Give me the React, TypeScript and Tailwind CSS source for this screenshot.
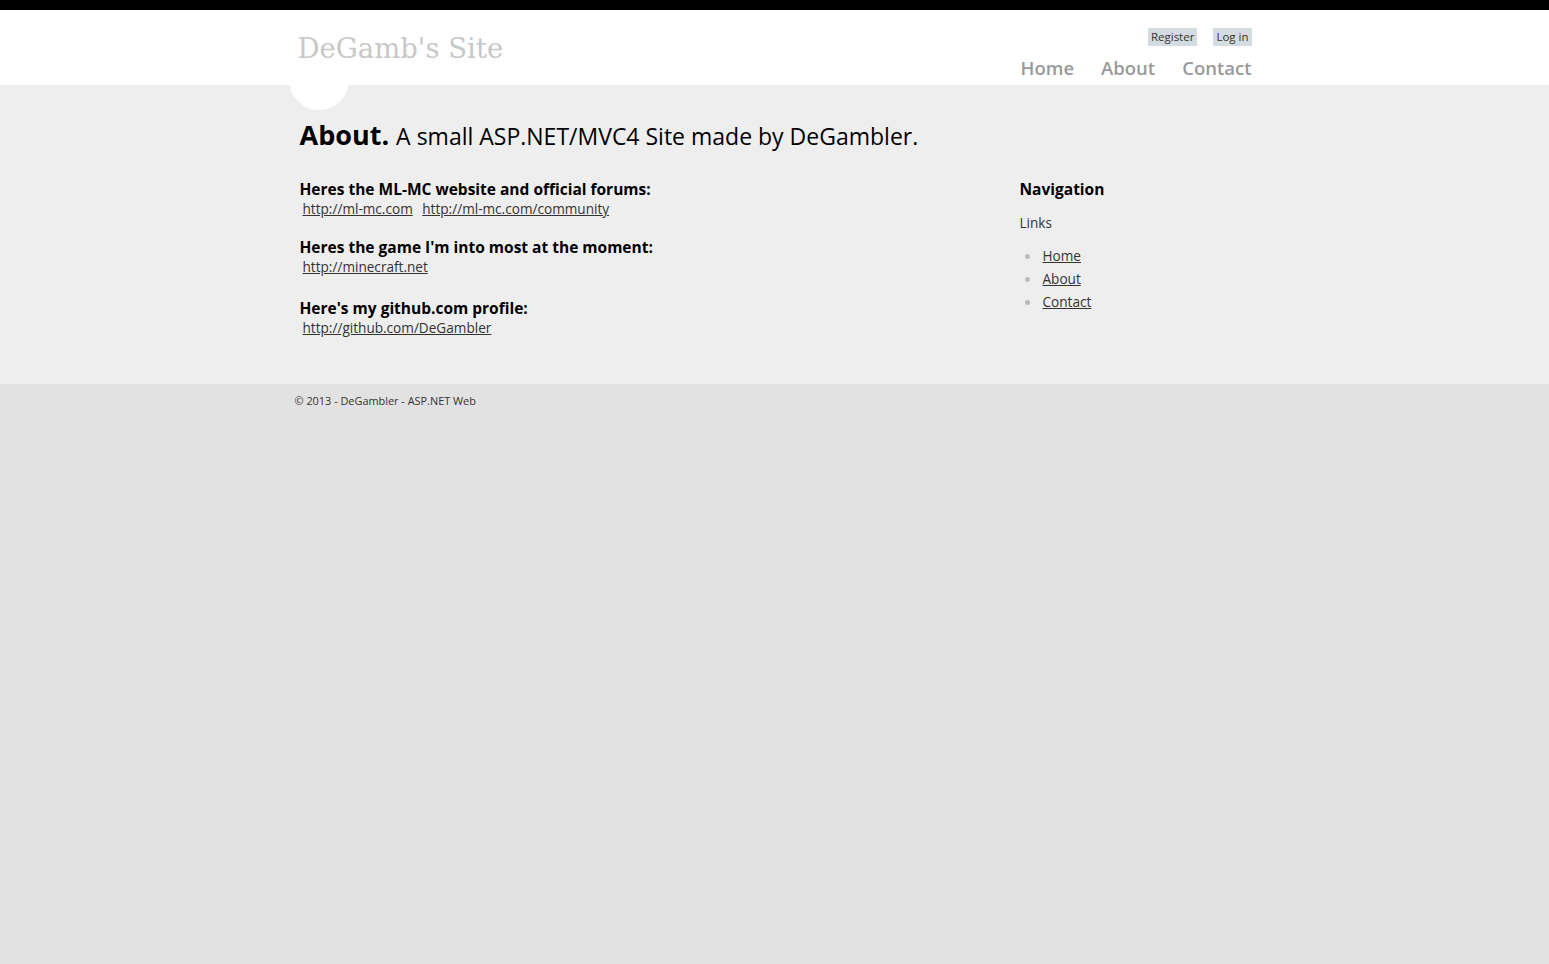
import React from 'react';

const sans = { fontFamily: '"Open Sans", "Noto Sans", sans-serif' };

const links = ['Home', 'About', 'Contact'];

export default function App() {
  return (
    <div className="min-h-screen bg-[#e2e2e2] text-[#333]" style={sans}>
      {/* header */}
      <div className="relative z-10 border-t-[10px] border-black bg-white">
        <div className="mx-auto flex h-[75px] w-[960px] justify-between">
          <div className="pl-[3px] pt-[20px]">
            <p
              className="text-[27.5px] leading-[36px] text-[#c8c8c8]"
              style={{ fontFamily: '"DejaVu Serif", "Liberation Serif", serif' }}
            >
              DeGamb's Site
            </p>
          </div>
          <div className="flex flex-col items-end pr-[3px] pt-[18px]">
            <div className="flex gap-[16px] text-[11.5px] leading-[18px]">
              <a className="bg-[#d3dce0] px-[3px] text-[#333]">Register</a>
              <a className="bg-[#d3dce0] px-[3px] text-[#333]">Log in</a>
            </div>
            <ul className="mt-[10px] flex gap-[27px] text-[18.5px] font-semibold leading-[24px] text-[#999]">
              {links.map(l => (
                <li key={l}>
                  <a>{l}</a>
                </li>
              ))}
            </ul>
          </div>
        </div>
      </div>

      {/* body */}
      <div className="bg-[#efeeef] pb-[47px]">
        <div className="relative mx-auto w-[960px] pl-[5px] pt-[32px]">
          {/* accent half circle */}
          <div className="absolute left-[-6px] top-[-35px] h-[60px] w-[60px] rounded-full bg-white" />
          <div className="relative flex items-baseline gap-[7px] text-black">
            <h1 className="text-[27px] font-bold leading-[36px]">About.</h1>
            <h2 className="text-[23px] leading-[36px]">A small ASP.NET/MVC4 Site made by DeGambler.</h2>
          </div>

          <div className="relative mt-[24px] grid grid-cols-[720px_251px]">
            <section className="text-[13.6px]">
              <h3 className="text-[15.5px] font-bold leading-[22px] text-black">Heres the ML-MC website and official forums:</h3>
              <p className="leading-[18px]">
                <a className="px-[3px] underline">http://ml-mc.com</a>{' '}
                <a className="px-[3px] underline">http://ml-mc.com/community</a>
              </p>
              <h3 className="mt-[18px] text-[15.5px] font-bold leading-[22px] text-black">Heres the game I'm into most at the moment:</h3>
              <p className="leading-[18px]">
                <a className="px-[3px] underline">http://minecraft.net</a>
              </p>
              <h3 className="mt-[21px] text-[15.5px] font-bold leading-[22px] text-black">Here's my github.com profile:</h3>
              <p className="leading-[18px]">
                <a className="px-[3px] underline">http://github.com/DeGambler</a>
              </p>
            </section>

            <aside className="text-[13.6px]">
              <h3 className="text-[15.5px] font-bold leading-[22px] text-black">Navigation</h3>
              <p className="mt-[14px] leading-[18px]">Links</p>
              <ul className="mt-[15px] flex flex-col gap-[5px]">
                {links.map(l => (
                  <li key={l} className="flex items-center leading-[18px]">
                    <span className="ml-[5px] mr-[13px] h-[5px] w-[5px] rounded-full bg-[#bbb]" />
                    <a className="underline">{l}</a>
                  </li>
                ))}
              </ul>
            </aside>
          </div>
        </div>
      </div>

      {/* footer */}
      <footer className="mx-auto w-[960px] pt-[9px] text-[10.9px] leading-[16px]">
        <p>© 2013 - DeGambler - ASP.NET Web</p>
      </footer>
    </div>
  );
}
